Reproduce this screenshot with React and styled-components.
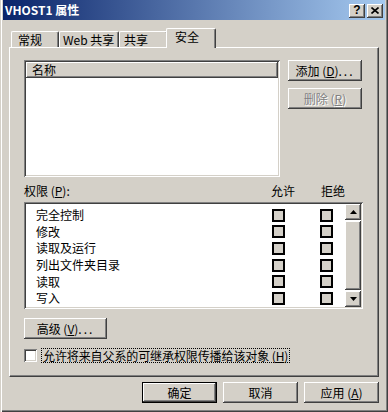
import React from 'react';
import styled, { createGlobalStyle } from 'styled-components';

const GlobalStyle = createGlobalStyle`
  body {
    margin: 0;
    background: #d4d0c8;
    font-family: "Noto Sans CJK SC", "Liberation Sans", sans-serif;
    font-size: 12px;
    color: #000;
  }
  * { box-sizing: border-box; }
`;

const raised = `
  background: #d4d0c8;
  box-shadow: inset -1px -1px 0 #404040, inset 1px 1px 0 #fff,
    inset -2px -2px 0 #808080, inset 2px 2px 0 #d4d0c8;
`;

const sunken = `
  box-shadow: inset 1px 1px 0 #808080, inset -1px -1px 0 #fff,
    inset 2px 2px 0 #404040, inset -2px -2px 0 #d4d0c8;
`;

const Win = styled.div`
  width: 388px;
  height: 412px;
  background: #d4d0c8;
  padding: 0 3px 3px 3px;
  box-shadow: inset 1px 0 0 #d4d0c8, inset 2px 0 0 #fff,
    inset -1px -1px 0 #404040, inset -2px -2px 0 #808080;
  display: flex;
  flex-direction: column;
`;

const TitleBar = styled.div`
  height: 20px;
  background: linear-gradient(to right, #0a246a, #a6caf0);
  display: flex;
  align-items: center;
  padding: 0 2px 0 2px;
`;

const Title = styled.div`
  flex: 1;
  color: #fff;
  font-weight: bold;
  font-size: 12px;
  line-height: 20px;
  white-space: nowrap;
`;

const CapButton = styled.div`
  ${raised}
  width: 16px;
  height: 14px;
  margin-left: ${(p) => (p.$gap ? '2px' : '0')};
  margin-top: 1px;
  display: flex;
  align-items: center;
  justify-content: center;
  font-family: "Liberation Sans", sans-serif;
  font-weight: bold;
  font-size: 12px;
  line-height: 1;
  padding-bottom: 1px;
`;

const Body = styled.div`
  padding: 8px 6px 0 6px;
  display: flex;
  flex-direction: column;
`;

const TabRow = styled.div`
  height: 19px;
  display: flex;
  align-items: flex-end;
  padding-left: 2px;
`;

const Tab = styled.div`
  position: relative;
  width: ${(p) => p.$w}px;
  height: ${(p) => (p.$active ? 20 : 16)}px;
  margin: ${(p) => (p.$active ? '0 -2px -1px -2px' : '0')};
  z-index: ${(p) => (p.$active ? 2 : 1)};
  background: #d4d0c8;
  border-top: 1px solid #fff;
  border-left: 1px solid #fff;
  border-right: 1px solid #404040;
  border-radius: 2px 2px 0 0;
  box-shadow: inset -1px 0 0 #808080;
  padding: 1px 0 0 ${(p) => p.$pad}px;
  line-height: 14px;
  white-space: pre;
  overflow: hidden;
`;

const Panel = styled.div`
  height: 330px;
  border-top: 1px solid #fff;
  border-left: 1px solid #fff;
  border-right: 1px solid #404040;
  border-bottom: 1px solid #404040;
  box-shadow: inset -1px -1px 0 #808080;
  padding: 12px 0 0 14px;
  display: flex;
  flex-direction: column;
`;

const TopRow = styled.div`
  display: flex;
  gap: 8px;
`;

const NameList = styled.div`
  width: 256px;
  height: 117px;
  background: #fff;
  padding: 2px;
  ${sunken}
`;

const ListHeader = styled.div`
  ${raised}
  height: 16px;
  line-height: 15px;
  padding-left: 6px;
`;

const ButtonCol = styled.div`
  display: flex;
  flex-direction: column;
  gap: 7px;
`;

const Button = styled.div`
  ${raised}
  width: ${(p) => p.$w}px;
  height: 21px;
  display: flex;
  align-items: center;
  justify-content: center;
  white-space: pre;
  line-height: 1;
  color: ${(p) => (p.$disabled ? '#808080' : '#000')};
  text-shadow: ${(p) => (p.$disabled ? '1px 1px 0 #fff' : 'none')};
`;

const DefaultButton = styled(Button)`
  border: 1px solid #000;
`;

const U = styled.span`
  text-decoration: underline;
`;

const Dots = styled.span`
  letter-spacing: 2px;
`;

const PermHeader = styled.div`
  height: 25px;
  width: 339px;
  display: grid;
  grid-template-columns: 234px 50px 50px;
  align-items: center;
  padding-top: 1px;
  white-space: pre;
`;

const ColLabel = styled.div`
  text-align: center;
`;

const PermList = styled.div`
  width: 339px;
  height: 107px;
  background: #fff;
  padding: 2px;
  display: flex;
  ${sunken}
`;

const Rows = styled.div`
  flex: 1;
  padding-top: 3px;
  overflow: hidden;
`;

const Row = styled.div`
  height: 16.6px;
  display: grid;
  grid-template-columns: 236px 13px 35px 13px;
  align-items: center;
  padding-left: 10px;
  line-height: 1;
`;

const Check = styled.div`
  width: 13px;
  height: 13px;
  border: 2px solid #000;
  background: #d4d0c8;
`;

const Scroll = styled.div`
  width: 16px;
  display: flex;
  flex-direction: column;
`;

const ScrollBtn = styled.div`
  ${raised}
  height: 16px;
  display: flex;
  align-items: center;
  justify-content: center;
`;

const Thumb = styled.div`
  ${raised}
  flex: 1;
  margin: 1px 0;
`;

const AdvRow = styled.div`
  margin-top: 9px;
`;

const InheritRow = styled.div`
  margin-top: 9px;
  height: 15px;
  display: flex;
  align-items: center;
  gap: 4px;
`;

const WhiteBox = styled.div`
  width: 13px;
  height: 13px;
  background: #fff;
  ${sunken}
`;

const FocusLabel = styled.div`
  border: 1px dotted #000;
  padding: 0 1px;
  height: 15px;
  line-height: 13px;
  white-space: pre;
  letter-spacing: -0.1px;
`;

const Footer = styled.div`
  margin-top: 5px;
  display: flex;
  justify-content: flex-end;
  gap: 6px;
`;

const Arrow = ({ up }) => (
  <svg width="7" height="4" viewBox="0 0 7 4">
    <polygon points={up ? '3.5,0 7,4 0,4' : '0,0 7,0 3.5,4'} fill="#000" />
  </svg>
);

const perms = ['完全控制', '修改', '读取及运行', '列出文件夹目录', '读取', '写入'];

export default function App() {
  return (
    <>
      <GlobalStyle />
      <Win>
        <TitleBar>
          <Title>VHOST1 属性</Title>
          <CapButton>?</CapButton>
          <CapButton $gap>
            <svg width="8" height="7" viewBox="0 0 8 7">
              <path d="M0.5 0.5 L7.5 6.5 M7.5 0.5 L0.5 6.5" stroke="#000" strokeWidth="1.6" />
            </svg>
          </CapButton>
        </TitleBar>
        <Body>
          <TabRow>
            <Tab $w={48} $pad={6}>常规</Tab>
            <Tab $w={60} $pad={3}>Web 共享</Tab>
            <Tab $w={49} $pad={4}>共享</Tab>
            <Tab $w={50} $pad={8} $active>安全</Tab>
          </TabRow>
          <Panel>
            <TopRow>
              <NameList>
                <ListHeader>名称</ListHeader>
              </NameList>
              <ButtonCol>
                <Button $w={74}>添加 (<U>D</U>)<Dots>...</Dots></Button>
                <Button $w={74} $disabled>删除 (<U>R</U>)</Button>
              </ButtonCol>
            </TopRow>
            <PermHeader>
              <div>权限 (<U>P</U>):</div>
              <ColLabel>允许</ColLabel>
              <ColLabel>拒绝</ColLabel>
            </PermHeader>
            <PermList>
              <Rows>
                {perms.map((p) => (
                  <Row key={p}>
                    <span>{p}</span>
                    <Check />
                    <span />
                    <Check />
                  </Row>
                ))}
              </Rows>
              <Scroll>
                <ScrollBtn><Arrow up /></ScrollBtn>
                <Thumb />
                <ScrollBtn><Arrow /></ScrollBtn>
              </Scroll>
            </PermList>
            <AdvRow>
              <Button $w={83}>高级 (<U>V</U>)<Dots>...</Dots></Button>
            </AdvRow>
            <InheritRow>
              <WhiteBox />
              <FocusLabel>允许将来自父系的可继承权限传播给该对象 (<U>H</U>)</FocusLabel>
            </InheritRow>
          </Panel>
          <Footer>
            <DefaultButton $w={75}>确定</DefaultButton>
            <Button $w={75}>取消</Button>
            <Button $w={75}>应用 (<U>A</U>)</Button>
          </Footer>
        </Body>
      </Win>
    </>
  );
}
